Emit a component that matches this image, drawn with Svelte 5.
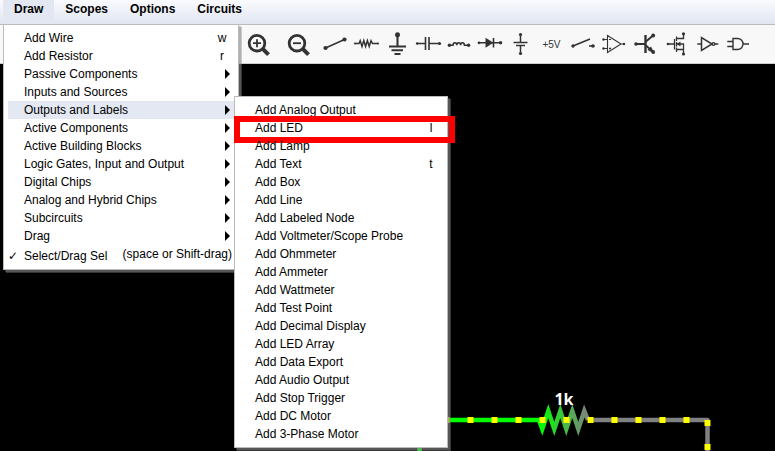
<script>
  const menus = ['Draw', 'Scopes', 'Options', 'Circuits'];

  const drawMenu = [
    { label: 'Add Wire', key: 'w' },
    { label: 'Add Resistor', key: 'r' },
    { label: 'Passive Components', sub: true },
    { label: 'Inputs and Sources', sub: true },
    { label: 'Outputs and Labels', sub: true, active: true },
    { label: 'Active Components', sub: true },
    { label: 'Active Building Blocks', sub: true },
    { label: 'Logic Gates, Input and Output', sub: true },
    { label: 'Digital Chips', sub: true },
    { label: 'Analog and Hybrid Chips', sub: true },
    { label: 'Subcircuits', sub: true },
    { label: 'Drag', sub: true },
    { label: 'Select/Drag Sel', key: '(space or Shift-drag)', checked: true }
  ];

  const outputsMenu = [
    { label: 'Add Analog Output' },
    { label: 'Add LED', key: 'l', marked: true },
    { label: 'Add Lamp' },
    { label: 'Add Text', key: 't' },
    { label: 'Add Box' },
    { label: 'Add Line' },
    { label: 'Add Labeled Node' },
    { label: 'Add Voltmeter/Scope Probe' },
    { label: 'Add Ohmmeter' },
    { label: 'Add Ammeter' },
    { label: 'Add Wattmeter' },
    { label: 'Add Test Point' },
    { label: 'Add Decimal Display' },
    { label: 'Add LED Array' },
    { label: 'Add Data Export' },
    { label: 'Add Audio Output' },
    { label: 'Add Stop Trigger' },
    { label: 'Add DC Motor' },
    { label: 'Add 3-Phase Motor' }
  ];

  // Stroked lines, heavier lines, filled shapes and terminal dots [x, y, r] of each tool.
  const tools = [
    { name: 'Wire', line: 'M6.5 23L25.5 14.5', w: 1.5, dots: [[6.5, 23, 2.1], [25.5, 14.5, 2.1]] },
    { name: 'Resistor', line: 'M5 18.5H9L10.2 15.6L12 21.4L13.8 15.6L15.6 21.4L17.4 15.6L19.2 21.4L21 15.6L22.5 18.5H28', w: 1.5, dots: [[5, 18.5, 1], [28, 18.5, 1]] },
    { name: 'Ground', line: 'M16.5 10V21M8 21.5H25M10.5 25.3H22M13.5 29H19.5', w: 2.1, dots: [[16.5, 9.7, 2.5]] },
    { name: 'Capacitor', line: 'M5 18.5H13.5M17 18.5H27.5', w: 1.5, heavy: 'M13.5 12V25M17 12V25', hw: 1.6, dots: [[5.2, 18.5, 1.3], [27.5, 18.5, 1.6]] },
    { name: 'Inductor', line: 'M6.5 20.3H10C10 16.8 13.8 16.8 13.8 20.3C13.8 16.8 17.6 16.8 17.6 20.3C17.6 16.8 21.4 16.8 21.4 20.3H25.5', w: 1.5, dots: [[6.4, 20.3, 1.7], [25.6, 20.3, 1.7]] },
    { name: 'Diode', line: 'M5 17.8H27M19.5 13V22.5', w: 1.6, fill: 'M11.5 12.8V22.8L19.5 17.8Z', dots: [[5, 17.8, 1.4], [26.6, 17.8, 1.7]] },
    { name: 'Battery', line: 'M15.5 10V17.5M15.5 20.5V28.5M8.5 17.5H22.5M11 20.5H20', w: 1.5, dots: [[15.5, 9.5, 1.6], [15.5, 28.5, 1.6]] },
    { name: '+5V', text: '+5V' },
    { name: 'Switch', line: 'M6 21L23 14M22 21H26', w: 1.5, dots: [[6, 21, 1.7], [26, 21, 1.8]] },
    { name: 'Op-amp', line: 'M9.5 10.5V27.5L23 19Z M5.5 14.5H9.5M5.5 23.5H9.5M23 19H26M11 14.5H13M11 23.5H13M12 22.5V24.5', w: 1.1, dots: [[5.5, 14.5, 1.2], [5.5, 23.5, 1.2], [26, 19, 1.2]] },
    { name: 'Transistor', line: 'M7 19H16M17 16.5L24 10.5M17 20.5L24 27', w: 1.9, heavy: 'M16.5 10V28', hw: 2.4, fill: 'M18.5 25L22 21.5L25.5 28.5Z', dots: [[7, 19, 1.8], [24.2, 10.5, 1.9], [24.2, 27, 1.9]] },
    { name: 'MOSFET', line: 'M8 19H14M14.5 14V24.5M16.5 11.5V16M16.5 17V21.5M16.5 22.5V27M16.5 13.5H23.5V9M16.5 19H23.5V29M16.5 24.5H23.5', w: 1.3, fill: 'M16.5 19L20.5 16.5V21.5Z', dots: [[8, 19, 1.3], [23.5, 8.8, 1.6], [23.5, 29, 1.6]] },
    { name: 'Inverter', line: 'M6.3 19H10.5M10.5 12.5V25.5L21 19Z M24 19H27.3', w: 1.5, ring: [22.5, 19, 1.4] },
    { name: 'AND gate', line: 'M5.3 16.5H11M5.3 21.5H11M11 13.5H15.5A5.5 5.5 0 0 1 15.5 24.5H11ZM21 19H27', w: 1.4 }
  ];

  const dots = [446, 470, 494, 518, 542, 566, 590, 614, 638, 662, 686];
</script>

{#snippet items(list)}
  {#each list as item}
    <li>
      <button class="row" class:active={item.active} class:tall={item.checked} role="menuitem">
        <span class="check">{item.checked ? '✓' : ''}</span>
        <span class="label">{item.label}</span>
        {#if item.sub}
          <svg class="arrow" width="5" height="10" viewBox="0 0 5 10" aria-hidden="true"><path d="M0 0L5 5L0 10Z" /></svg>
        {:else if item.key}
          <span class="key" class:long={item.key.length > 1}>{item.key}</span>
        {/if}
      </button>
      {#if item.marked}<span class="mark"></span>{/if}
    </li>
  {/each}
{/snippet}

<div class="app">
  <nav class="menubar">
    {#each menus as name, i}
      <button class="menu" class:open={i === 0}>{name}</button>
    {/each}
  </nav>

  <div class="toolbar">
    {#each ['Zoom in', 'Zoom out'] as name, i}
      <button class="tool zoom" aria-label={name}>
        <svg width="40" height="38" viewBox="0 0 40 38">
          <circle cx="18" cy="18.2" r="7.8" stroke-width="2.8" />
          <path d="M23.5 23.7L29.5 29.7" stroke-width="4" />
          <path d={i === 0 ? 'M14 18.2H22M18 14.2V22.2' : 'M14 18.2H22'} stroke-width="1.8" />
        </svg>
      </button>
    {/each}
    {#each tools as t}
      <button class="tool" aria-label={t.name}>
        {#if t.text}
          {t.text}
        {:else}
          <svg width="31" height="38" viewBox="0 0 31 38">
            <path d={t.line} stroke-width={t.w} />
            {#if t.heavy}<path d={t.heavy} stroke-width={t.hw} />{/if}
            {#if t.fill}<path class="solid" d={t.fill} />{/if}
            {#if t.ring}<circle cx={t.ring[0]} cy={t.ring[1]} r={t.ring[2]} stroke-width="1.4" />{/if}
            {#each t.dots ?? [] as [x, y, r]}
              <circle class="solid" cx={x} cy={y} {r} />
            {/each}
          </svg>
        {/if}
      </button>
    {/each}
  </div>

  <main class="canvas">
    <svg class="circuit" width="775" height="387" viewBox="0 64 775 387">
      <defs>
        <linearGradient id="volt" gradientUnits="userSpaceOnUse" x1="540" y1="0" x2="588" y2="0">
          <stop offset="0" stop-color="#00ff00" />
          <stop offset="1" stop-color="#808080" />
        </linearGradient>
      </defs>
      <path d="M419.5 460V420H540" stroke="#00ff00" />
      <path d="M588 420H707.5V460" stroke="#808080" stroke-linejoin="round" />
      <path class="zigzag" d="M539 420L542.3 429L548.3 411L554.3 429L560.3 411L566.3 429L572.3 411L578.3 429L584.3 411L588 420" stroke="url(#volt)" />
      {#each dots as x}
        <rect x={x + 0.5 - 3} y="417" width="6" height="6" />
      {/each}
      <rect x="704.5" y="420" width="6" height="6" />
      <rect x="704.5" y="444" width="6" height="6" />
      <text x="564" y="405" text-anchor="middle">1k</text>
    </svg>
  </main>

  <ul class="popup main-popup" role="menu">{@render items(drawMenu)}</ul>
  <ul class="popup sub-popup" role="menu">{@render items(outputsMenu)}</ul>
</div>

<style>
  :global(body) {
    background: #000;
  }

  .app {
    position: relative;
    display: flex;
    flex-direction: column;
    height: 100vh;
    overflow: hidden;
    font-family: 'Liberation Sans', Arial, sans-serif;
    font-size: 12px;
    color: #000;
  }

  button {
    margin: 0;
    border: 0;
    padding: 0;
    background: none;
    font: inherit;
    color: inherit;
  }

  .menubar {
    display: flex;
    flex: none;
    height: 24px;
    padding-left: 3px;
    background: linear-gradient(#fafbfe, #e0e5f1);
    border-bottom: 1px solid #bbb;
  }

  .menu {
    height: 24px;
    padding: 0 11px 6px;
    font-weight: bold;
  }

  .menu.open {
    background: #e2e7f2;
  }

  .toolbar {
    display: flex;
    flex: none;
    height: 38px;
    padding-left: 239px;
    background: #f8f8f8;
    border-bottom: 1px solid #ccc;
  }

  .tool {
    flex: none;
    width: 31px;
    height: 38px;
    font-size: 10px;
    color: #333;
  }

  .zoom {
    width: 40px;
  }

  .tool svg {
    display: block;
    fill: none;
    stroke: #333;
  }

  .tool .solid {
    fill: #333;
    stroke: none;
  }

  .canvas {
    flex: 1;
    overflow: hidden;
    background: #000;
  }

  .circuit {
    display: block;
    fill: none;
    stroke-width: 4.5;
  }

  .zigzag {
    stroke-miterlimit: 10;
  }

  .circuit rect {
    fill: #ff0;
  }

  .circuit text {
    fill: #fff;
    font-family: 'Noto Sans', 'Open Sans', sans-serif;
    font-size: 16px;
    font-weight: bold;
  }

  .popup {
    position: absolute;
    box-sizing: border-box;
    margin: 0;
    padding: 4px;
    list-style: none;
    background: #fff;
    border: 1px solid #bbb;
    box-shadow:
      2px 2px 0 rgba(136, 136, 136, 0.4),
      3px 3px 0 rgba(136, 136, 136, 0.4);
  }

  .main-popup {
    top: 24px;
    left: 3px;
    width: 236px;
    padding-bottom: 3px;
  }

  .sub-popup {
    top: 96px;
    left: 234px;
    width: 214px;
  }

  li {
    position: relative;
  }

  .row {
    display: flex;
    align-items: center;
    width: 100%;
    height: 18px;
    text-align: left;
    white-space: nowrap;
  }

  .row.active {
    background: #e3e8f3;
  }

  .row.tall {
    height: 21px;
  }

  .check {
    width: 16px;
    font-family: 'DejaVu Sans', sans-serif;
  }

  .label {
    flex: 1;
  }

  .arrow {
    margin-right: 4px;
  }

  .key {
    width: 24px;
    text-align: center;
  }

  .key.long {
    width: auto;
    padding: 0 2px 4px 0;
  }

  .mark {
    position: absolute;
    inset: -3px -12px -6px -5px;
    border: 6px solid #f00;
  }
</style>
